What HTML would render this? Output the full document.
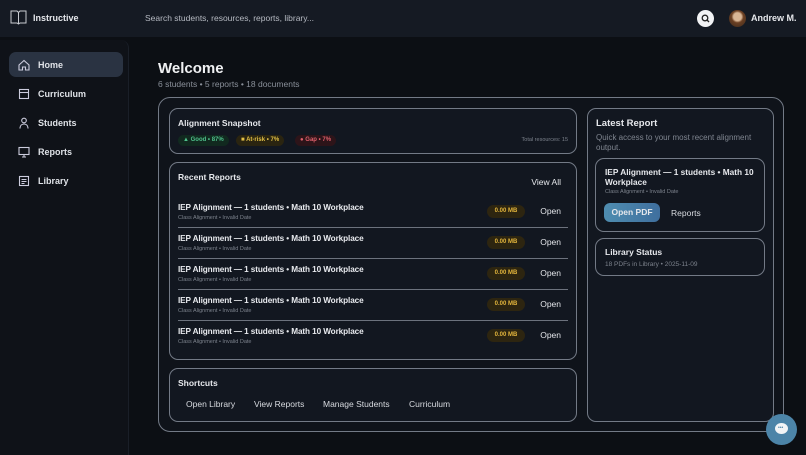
<!DOCTYPE html>
<html><head><style>
*{box-sizing:border-box;margin:0;padding:0}
body{width:806px;height:455px;background:#0c0f14;font-family:"Liberation Sans",sans-serif;color:#e6e8ec;position:relative;overflow:hidden}
.abs{position:absolute}
.hdr{left:0;top:0;width:806px;height:37px;background:#151a23}
.side{left:0;top:40px;width:129px;height:415px;background:#0f1218;border-right:1px solid #1a1f28;border-radius:0 8px 0 0}
.nav{position:absolute;left:9px;width:114px;height:25px;display:flex;align-items:center;font-size:9px;font-weight:bold;color:#dfe2e7}
.nav svg{margin:0 8px 0 9px}
.card{position:absolute;border:1px solid #737a86;border-radius:9px;background:#121720}
.b{font-weight:bold}
.row{position:absolute;left:8px;width:390px;height:31px;border-bottom:1.5px solid #6c727d}
.row .t{position:absolute;left:0;top:6px;font-size:8.2px;font-weight:bold;color:#e8eaee;letter-spacing:-0.1px}
.row .s{position:absolute;left:0;top:18px;font-size:5.5px;color:#7c828c}
.mb{position:absolute;right:43px;top:8px;width:38px;height:13px;border-radius:7px;background:#2d2510;color:#e3b53c;font-size:6px;font-weight:bold;text-align:center;line-height:13px}
.op{position:absolute;right:7px;top:9px;font-size:8.5px;color:#e2e4e8}
.pill{position:absolute;top:26px;height:11px;border-radius:6px;font-size:6px;font-weight:bold;line-height:11px;padding:0 5px}
</style></head><body>
<div class="abs hdr"></div>
<svg class="abs" style="left:10px;top:10px" width="17" height="15" viewBox="0 0 17 15" fill="none" stroke="#c9ccd2" stroke-width="1"><path d="M1 1h6l1.5 1.5L10 1h6v12h-6l-1.5 1-1.5-1H1z"/><path d="M8.5 2.5v11"/></svg>
<div class="abs b" style="left:33px;top:13px;font-size:9px">Instructive</div>
<div class="abs" style="left:145px;top:13px;font-size:8.5px;color:#b6bac2">Search students, resources, reports, library...</div>
<div class="abs" style="left:697px;top:10px;width:17px;height:17px;border-radius:50%;background:#f2f3f5"></div>
<svg class="abs" style="left:701px;top:14px" width="9" height="9" viewBox="0 0 9 9" fill="none" stroke="#222" stroke-width="1.3"><circle cx="4" cy="4" r="2.8"/><path d="M6 6l2 2"/></svg>
<div class="abs" style="left:729px;top:10px;width:17px;height:17px;border-radius:50%;background:radial-gradient(circle at 50% 40%,#d8b594 0 30%,#6b3f22 45%,#3b2a1e 100%)"></div>
<div class="abs b" style="left:751px;top:13px;font-size:9px">Andrew M.</div>

<div class="abs side"></div>
<div class="nav" style="top:52px;background:#2a3342;border-radius:7px"><svg width="12" height="12" viewBox="0 0 12 12" fill="none" stroke="#ccd" stroke-width="1.1"><path d="M1 6L6 1.5 11 6v5H7.5V8h-3v3H1z"/></svg>Home</div>
<div class="nav" style="top:81px"><svg width="12" height="12" viewBox="0 0 12 12" fill="none" stroke="#ccd" stroke-width="1.1"><rect x="1.5" y="1.5" width="9" height="9"/><path d="M1.5 4.5h9"/></svg>Curriculum</div>
<div class="nav" style="top:110px"><svg width="12" height="12" viewBox="0 0 12 12" fill="none" stroke="#ccd" stroke-width="1.1"><circle cx="6" cy="3.5" r="2.3"/><path d="M2 11.5c0-3 1.8-4.5 4-4.5s4 1.5 4 4.5"/></svg>Students</div>
<div class="nav" style="top:139px"><svg width="12" height="12" viewBox="0 0 12 12" fill="none" stroke="#ccd" stroke-width="1.1"><rect x="1" y="1.5" width="10" height="7"/><path d="M4 11h4M6 8.5V11"/></svg>Reports</div>
<div class="nav" style="top:168px"><svg width="12" height="12" viewBox="0 0 12 12" fill="none" stroke="#ccd" stroke-width="1.1"><rect x="1.5" y="1.5" width="9" height="9"/><path d="M3.5 4.5h5M3.5 6.5h5M3.5 8.5h3"/></svg>Library</div>

<div class="abs b" style="left:158px;top:60px;font-size:15px;color:#f0f1f3">Welcome</div>
<div class="abs" style="left:158px;top:79px;font-size:8.5px;color:#8a909a">6 students • 5 reports • 18 documents</div>

<div class="card" style="left:158px;top:97px;width:626px;height:335px;background:#0f131a;border-radius:12px"></div>

<div class="card" style="left:169px;top:108px;width:408px;height:46px">
<div class="abs b" style="left:8px;top:9px;font-size:8.5px">Alignment Snapshot</div>
<div class="pill" style="left:8px;background:#11291f;color:#4fc08b">▲ Good • 87%</div>
<div class="pill" style="left:66px;background:#2a2410;color:#e2c046">■ At-risk • 7%</div>
<div class="pill" style="left:125px;background:#2d1419;color:#e0606c">● Gap • 7%</div>
<div class="abs" style="right:8px;top:28px;font-size:5.5px;color:#7c828c">Total resources: 15</div>
</div>

<div class="card" style="left:169px;top:162px;width:408px;height:198px">
<div class="abs b" style="left:8px;top:9px;font-size:8.5px">Recent Reports</div>
<div class="abs" style="right:15px;top:14px;font-size:8.5px">View All</div>
<div class="row" style="top:34px"><div class="t">IEP Alignment — 1 students • Math 10 Workplace</div><div class="s">Class Alignment • Invalid Date</div><div class="mb">0.00 MB</div><div class="op">Open</div></div>
<div class="row" style="top:65px"><div class="t">IEP Alignment — 1 students • Math 10 Workplace</div><div class="s">Class Alignment • Invalid Date</div><div class="mb">0.00 MB</div><div class="op">Open</div></div>
<div class="row" style="top:96px"><div class="t">IEP Alignment — 1 students • Math 10 Workplace</div><div class="s">Class Alignment • Invalid Date</div><div class="mb">0.00 MB</div><div class="op">Open</div></div>
<div class="row" style="top:127px"><div class="t">IEP Alignment — 1 students • Math 10 Workplace</div><div class="s">Class Alignment • Invalid Date</div><div class="mb">0.00 MB</div><div class="op">Open</div></div>
<div class="row" style="top:158px;border:none"><div class="t">IEP Alignment — 1 students • Math 10 Workplace</div><div class="s">Class Alignment • Invalid Date</div><div class="mb">0.00 MB</div><div class="op">Open</div></div>
</div>

<div class="card" style="left:169px;top:368px;width:408px;height:54px">
<div class="abs b" style="left:8px;top:9px;font-size:8.5px">Shortcuts</div>
<div class="abs" style="left:16px;top:30px;font-size:8.5px;color:#d8dbe0">Open Library</div>
<div class="abs" style="left:84px;top:30px;font-size:8.5px;color:#d8dbe0">View Reports</div>
<div class="abs" style="left:153px;top:30px;font-size:8.5px;color:#d8dbe0">Manage Students</div>
<div class="abs" style="left:239px;top:30px;font-size:8.5px;color:#d8dbe0">Curriculum</div>
</div>

<div class="card" style="left:587px;top:108px;width:187px;height:314px">
<div class="abs b" style="left:8px;top:9px;font-size:9.5px">Latest Report</div>
<div class="abs" style="left:8px;top:24px;width:175px;font-size:8px;color:#7f858f;line-height:10px">Quick access to your most recent alignment output.</div>
<div class="card" style="left:7px;top:49px;width:170px;height:74px">
<div class="abs b" style="left:9px;top:8px;width:155px;font-size:8.3px;line-height:10px">IEP Alignment — 1 students • Math 10 Workplace</div>
<div class="abs" style="left:9px;top:30px;font-size:5.5px;color:#7c828c">Class Alignment • Invalid Date</div>
<div class="abs b" style="left:8px;top:44px;width:56px;height:19px;border-radius:6px;background:linear-gradient(90deg,#4f8db0,#3f6f9e);font-size:8.5px;text-align:center;line-height:19px">Open PDF</div>
<div class="abs" style="left:75px;top:49px;font-size:8.5px;color:#d8dbe0">Reports</div>
</div>
<div class="card" style="left:7px;top:129px;width:170px;height:38px">
<div class="abs b" style="left:9px;top:8px;font-size:8.5px">Library Status</div>
<div class="abs" style="left:9px;top:22px;font-size:6.5px;color:#7c828c">18 PDFs in Library • 2025-11-09</div>
</div>
</div>

<div class="abs" style="left:766px;top:414px;width:31px;height:31px;border-radius:50%;background:#4c84a8"></div>
<div class="abs" style="left:775px;top:423px;width:13px;height:11px;border-radius:50%;background:#f2f4f6"></div>
<div class="abs" style="left:778px;top:427px;font-size:5px;color:#4c84a8;line-height:3px">•••</div>
</body></html>
